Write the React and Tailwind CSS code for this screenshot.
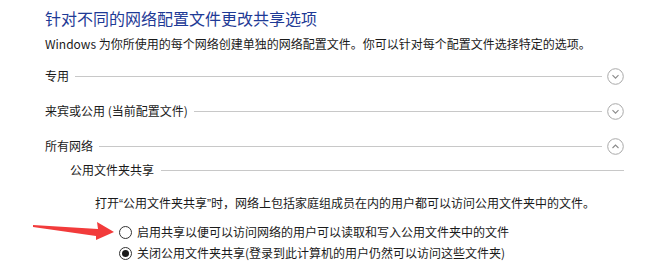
function CircleChevron({ up }) {
  return (
    <svg width="17" height="17" viewBox="0 0 17 17" className="shrink-0">
      <circle cx="8.5" cy="8.5" r="7.8" fill="none" stroke="#a9a9a9" strokeWidth="1" />
      <path
        d={up ? "M5.5 10 L8.5 7 L11.5 10" : "M5.5 7.2 L8.5 10.2 L11.5 7.2"}
        fill="none"
        stroke="#8a8a8a"
        strokeWidth="1.1"
      />
    </svg>
  );
}

function Section({ label, up, className }) {
  return (
    <div className={"flex items-center h-[20px] " + className}>
      <span className="text-[12px] leading-[20px] text-[#1a1a1a] whitespace-nowrap">{label}</span>
      <div className="flex-1 h-px bg-[#c8c8c8] ml-[6px] mr-[5px]" />
      <CircleChevron up={up} />
    </div>
  );
}

function Radio({ checked, label, className }) {
  return (
    <div className={"flex items-center h-[20px] " + className}>
      <span className="w-[13px] h-[13px] rounded-full border border-[#333] flex items-center justify-center bg-white shrink-0">
        {checked && <span className="w-[7px] h-[7px] rounded-full bg-[#1a1a1a]" />}
      </span>
      <span className="ml-[5px] text-[12px] leading-[20px] text-[#1a1a1a] whitespace-nowrap">{label}</span>
    </div>
  );
}

export default function App() {
  return (
    <div
      className="relative w-[653px] h-[274px] bg-white overflow-hidden"
      style={{ fontFamily: '"Noto Sans CJK SC", "Noto Sans", sans-serif' }}
    >
      <div className="pl-[45px] pr-[29px] pt-[8px]">
        <h1 className="h-[20px] text-[16px] leading-[20px] text-[#1e3a96] whitespace-nowrap">
          针对不同的网络配置文件更改共享选项
        </h1>
        <p className="mt-[8px] h-[16px] text-[12px] leading-[16px] text-[#1a1a1a] whitespace-nowrap">
          Windows 为你所使用的每个网络创建单独的网络配置文件。你可以针对每个配置文件选择特定的选项。
        </p>

        <Section label="专用" className="mt-[14px]" />
        <Section label="来宾或公用 (当前配置文件)" className="mt-[15px]" />
        <Section label="所有网络" up className="mt-[15px]" />

        <div className="flex items-center h-[20px] mt-[4px] pl-[25px]">
          <span className="text-[12px] leading-[20px] text-[#1a1a1a] whitespace-nowrap">公用文件夹共享</span>
          <div className="flex-1 h-px bg-[#c8c8c8] ml-[7px]" />
        </div>

        <div className="pl-[50px]">
          <p className="mt-[13px] h-[20px] text-[12px] leading-[20px] text-[#1a1a1a] whitespace-nowrap">
            打开<span className="font-['Liberation_Sans']">“</span>公用文件夹共享<span className="font-['Liberation_Sans']">”</span>时，网络上包括家庭组成员在内的用户都可以访问公用文件夹中的文件。
          </p>
          <div className="pl-[24px]">
            <Radio className="mt-[9px]" label="启用共享以便可以访问网络的用户可以读取和写入公用文件夹中的文件" />
            <Radio checked className="mt-[1px]" label="关闭公用文件夹共享(登录到此计算机的用户仍然可以访问这些文件夹)" />
          </div>
        </div>
      </div>

      <svg className="absolute left-0 top-0 pointer-events-none" width="653" height="274">
        <polygon
          points="33,225 98,229 97,222 114,232 96,240 96,236 33,227"
          fill="#f23b3b"
        />
      </svg>
    </div>
  );
}
